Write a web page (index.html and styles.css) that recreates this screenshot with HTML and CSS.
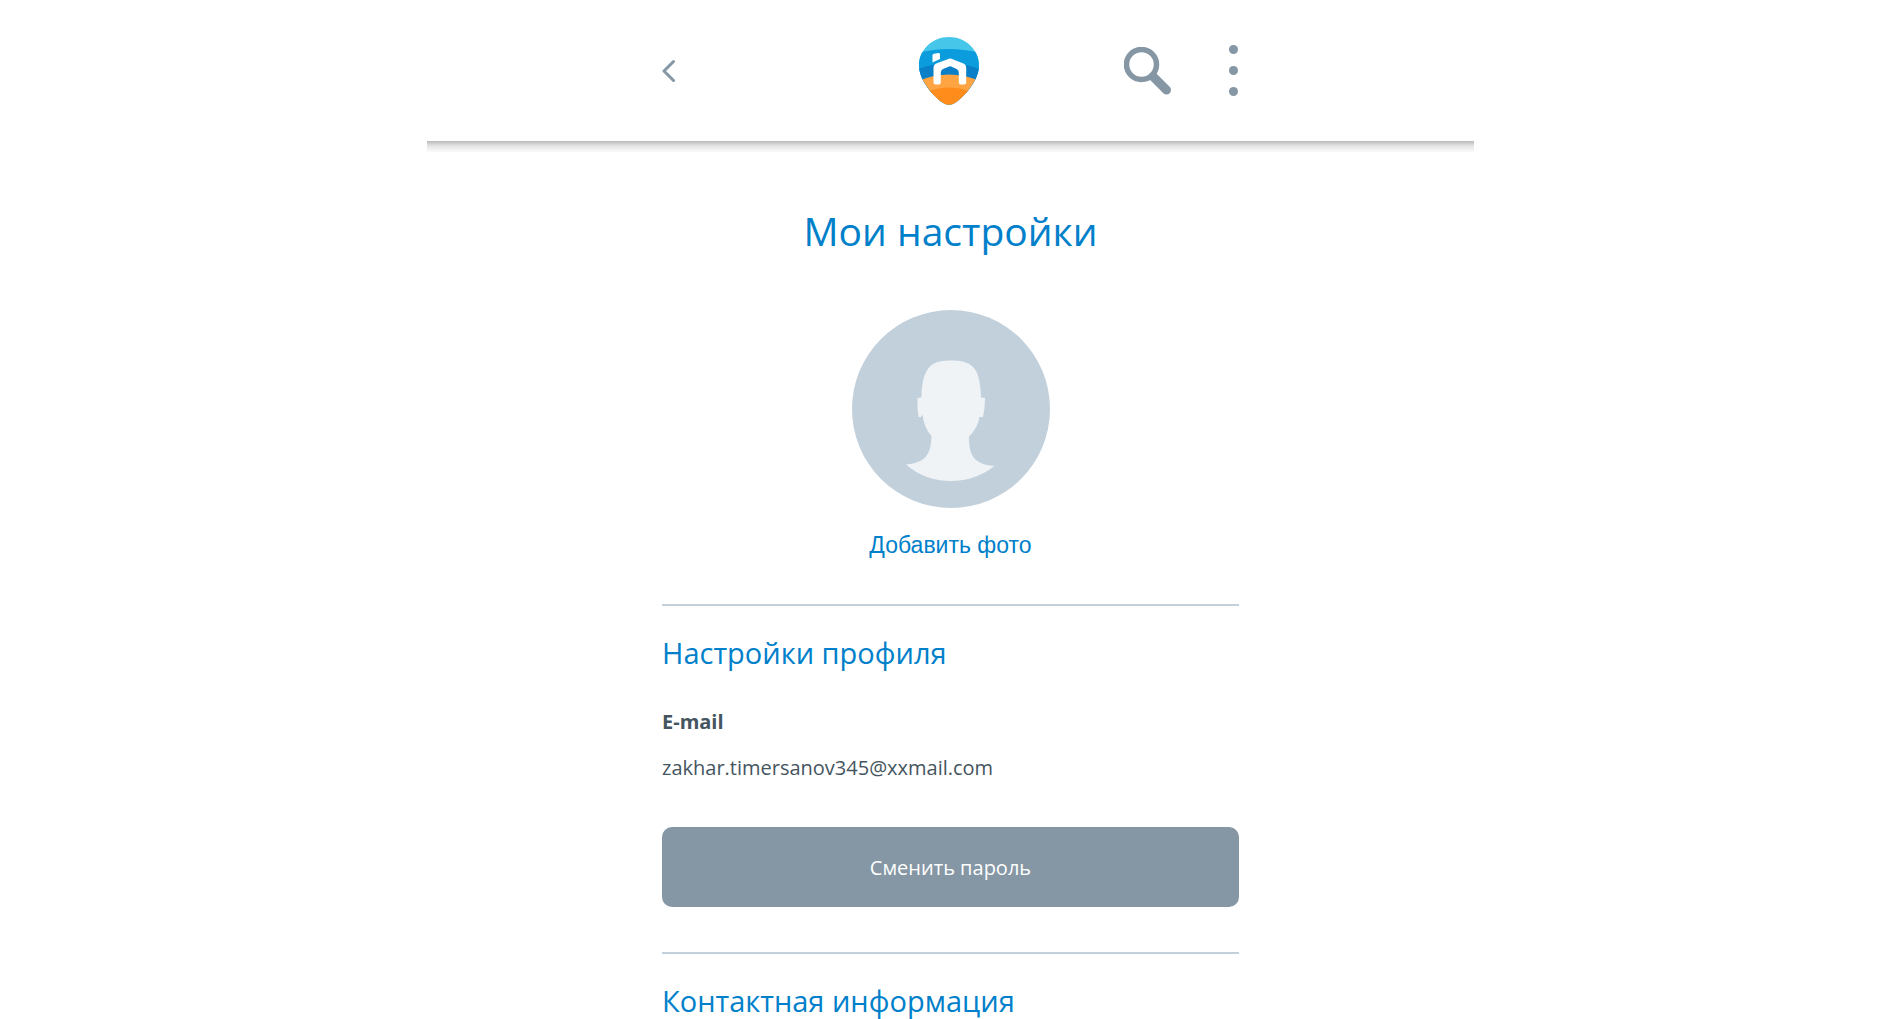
FILE: index.html
```html
<!DOCTYPE html>
<html lang="ru">
<head>
<meta charset="utf-8">
<meta name="viewport" content="width=device-width, initial-scale=1">
<title>Мои настройки</title>
<link rel="stylesheet" href="styles.css">
</head>
<body>
<div class="page">
  <header class="header">
    <nav class="header-bar">
      <a class="icon-link" href="#" aria-label="Назад">
        <svg width="14" height="24" viewBox="0 0 14 24" fill="none" stroke="#8596a4" stroke-width="3" stroke-linecap="round" stroke-linejoin="round"><path d="M11.500 2.500 2 12l9.500 9.500"/></svg>
      </a>
      <a class="icon-link" href="#" aria-label="Главная">
        <svg width="66" height="70" viewBox="0 0 66 70">
          <defs><clipPath id="drop"><path d="M31 1C14 1 1 14 1 29.500 1 42 12 57 23 65.500Q31 72 39 65.500C50 57 61 42 61 29.500 61 14 48 1 31 1Z"/></clipPath></defs>
          <g clip-path="url(#drop)">
            <rect width="62" height="70" fill="#46c6e8"/>
            <path d="M0 17Q31 9 62 17V70H0Z" fill="#0a9cdc"/>
            <path d="M0 33Q31 22 62 33V70H0Z" fill="#087fc6"/>
            <path d="M0 45Q31 32 62 45V70H0Z" fill="#ffa443"/>
            <path d="M0 60Q31 43 62 60V70H0Z" fill="#ff8c1b"/>
          </g>
          <path d="M14.500 19.500q0-1.500 1.500-1.800L20.500 17q1.500-.2 1.500 1.500v4.500L14.500 26.500Z" fill="#fff"/>
          <path d="M15.500 31.500q0-2.800 2.700-4L31 22.700q1.200-.5 2.400 0L45.500 27.500q2.700 1.200 2.700 4V46.500q0 2-2 2h-3.400q-2 0-2-2V36.500q0-2.500-2.200-3.500L33.200 30.500q-1-.5-2 0L25 33q-2.200 1-2.200 3.500v10q0 2-2 2h-3.300q-2 0-2-2Z" fill="#fff"/>
        </svg>
      </a>
      <div class="header-tools">
        <a class="icon-link" href="#" aria-label="Поиск">
          <svg width="48" height="48" viewBox="0 0 48 48" fill="none" stroke="#8596a4"><circle cx="17.500" cy="17.500" r="15" stroke-width="5.500"/><path d="m29 29.500 13.500 13.500" stroke-width="9" stroke-linecap="round"/></svg>
        </a>
        <button class="menu-button" type="button" aria-label="Меню">
          <svg width="10" height="52" viewBox="0 0 10 52" fill="#8596a4"><circle cx="4.500" cy="4.500" r="4.500"/><circle cx="4.500" cy="25.500" r="4.500"/><circle cx="4.500" cy="46.500" r="4.500"/></svg>
        </button>
      </div>
    </nav>
  </header>
  <main class="content">
    <h1 class="title">Мои настройки</h1>
    <div class="photo">
      <svg class="avatar" viewBox="0 0 198 198" aria-hidden="true">
        <circle cx="99" cy="99" r="99" fill="#c2d0dc"/>
        <path d="M99 50.500C117 50.500 124 56 127 69Q129 79 129 87.500L133 88Q133 98 131 107H127.500Q126 118 117 126.500C117 143 120 154.500 142.500 156Q123 171 99 171 73 171 54 154.500C76 153 79 141 79.500 126Q72 118 70.500 104.500L69 107H66.500Q65 98 65.500 88L69.500 87.500Q69 79 71 71C75 55 82 50.500 99 50.500Z" fill="#eff3f6"/>
      </svg>
      <button class="photo-button" type="button">Добавить фото</button>
    </div>
    <section class="section">
      <h2 class="section-title">Настройки профиля</h2>
      <dl class="field">
        <dt class="field-name">E-mail</dt>
        <dd class="field-value">zakhar.timersanov345@xxmail.com</dd>
      </dl>
      <button class="wide-button" type="button">Сменить пароль</button>
    </section>
    <section class="section">
      <h2 class="section-title">Контактная информация</h2>
    </section>
  </main>
</div>
</body>
</html>
```
FILE: styles.css
```css
body {
  margin: 0;
  background: #fff;
  color: #455560;
  font: 20px/28px "Open Sans", sans-serif;
}

.page {
  max-width: 1047px;
  margin: 0 auto;
}

.header-bar,
.content {
  box-sizing: border-box;
  max-width: 609px;
  margin: 0 auto;
  padding: 0 16px;
}

.header-bar {
  display: grid;
  grid-template-columns: 1fr auto 1fr;
  align-items: center;
  height: 141px;
}

.header::after {
  content: "";
  display: block;
  height: 12px;
  background: linear-gradient(#b8b8b8, #e4e4e4 40%, #fff);
}

.icon-link {
  display: flex;
}

.header-tools {
  display: flex;
  align-items: center;
  justify-content: flex-end;
  gap: 57px;
}

.menu-button,
.photo-button {
  display: flex;
  padding: 0;
  border: 0;
  background: none;
  cursor: pointer;
}

.title {
  margin: 50px 0 51px;
  color: #0080ca;
  font-size: 39px;
  line-height: 56px;
  font-weight: 400;
  text-align: center;
}

.photo {
  display: flex;
  flex-direction: column;
  align-items: center;
  gap: 21px;
  margin-bottom: 43px;
}

.avatar {
  width: 198px;
  height: 198px;
}

.photo-button {
  color: #0080ca;
  font: 23px/32px "Liberation Sans", Arial, sans-serif;
}

.section {
  padding: 27px 0 45px;
  border-top: 2px solid #c2d0dc;
}

.section:last-child {
  padding-bottom: 0;
}

.section-title {
  margin: 0;
  color: #0080ca;
  font-size: 29px;
  line-height: 40px;
  font-weight: 400;
}

.field {
  margin: 35px 0 45px;
}

.field-name {
  margin-bottom: 18px;
  font-weight: 700;
}

.field-value {
  margin: 0;
}

.wide-button {
  width: 100%;
  height: 80px;
  padding: 2px 0 0;
  border: 0;
  border-radius: 10px;
  background: #8596a4;
  color: #fff;
  font: inherit;
  cursor: pointer;
}
```
